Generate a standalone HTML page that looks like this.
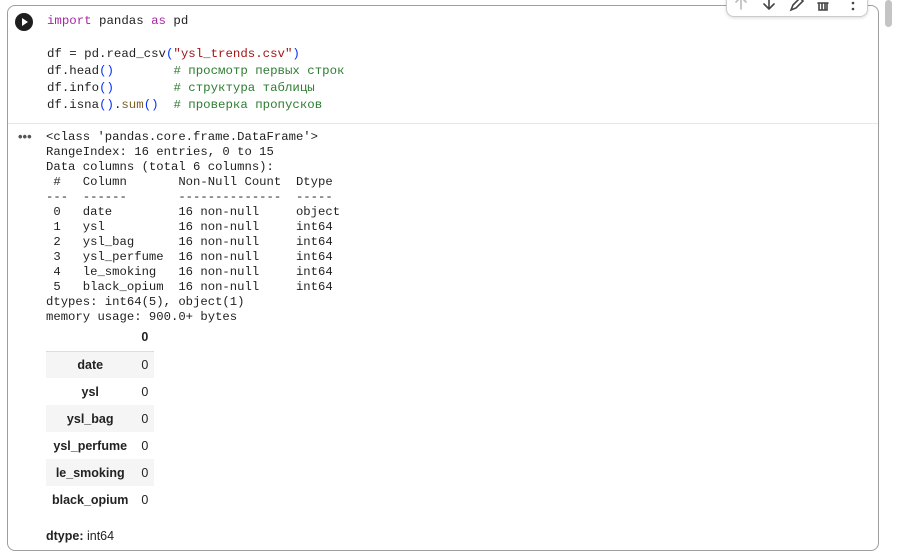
<!DOCTYPE html>
<html><head><meta charset="utf-8"><style>
body{margin:0;width:900px;height:558px;background:#fff;overflow:hidden;position:relative;font-family:"Liberation Sans",sans-serif}
.cell{position:absolute;left:7px;top:5px;width:872px;height:546px;border:1px solid #9e9e9e;border-radius:8px;box-sizing:border-box}
.code{position:absolute;left:47px;top:13px;font:12.4px/16.7px "Liberation Mono",monospace;color:#1f1f1f;white-space:pre;margin:0}
.kw{color:#a626a4}.st{color:#a31515}.br{color:#0431fa}.cm{color:#2e7d32}.fn{color:#795e26}
.sep{position:absolute;left:8px;top:123px;width:870px;height:1px;background:#e8e8e8}
.out{position:absolute;left:46px;top:130px;font:12.25px/15px "Liberation Mono",monospace;color:#1f1f1f;white-space:pre;margin:0}
table{position:absolute;left:46px;top:324px;border-collapse:collapse;font-size:12.5px;color:#222}
td,th{height:27px;box-sizing:border-box}
th{text-align:center;font-weight:bold;padding:0 6px}
td{text-align:left;padding:0 6px 0 7px}
tr.g{background:#f5f5f5}
thead th{border-bottom:1px solid #ddd}
.dt{position:absolute;left:46px;top:529px;font-size:12.5px;color:#222}
.tb{position:absolute;left:726px;top:-10px;width:140px;height:25px;border:1px solid #ccc;border-radius:8px;background:#fff;box-shadow:0 1px 3px rgba(0,0,0,.15)}
.sb{position:absolute;left:885px;top:0;width:7px;height:27px;background:#c4c4c4;border-radius:4px}
</style></head><body>
<div class="cell"></div>
<div class="tb">
<svg width="140" height="25" style="position:absolute;left:0;top:0" fill="none" stroke-width="1.6" stroke-linecap="round">
<path d="M14 6v12M9 11l5-5 5 5" stroke="#bbb"/>
<path d="M42 6v12M37 13l5 5 5-5" stroke="#444"/>
<path d="M64 19l2-5 7-7 3 3-7 7z" stroke="#444"/>
<path d="M92 12v7h8v-7M91 12h10M95 12v6M98 12v6" stroke="#444"/>
<circle cx="126" cy="12" r="1.3" fill="#444" stroke="none"/><circle cx="126" cy="18" r="1.3" fill="#444" stroke="none"/>
</svg></div>
<div class="sb"></div>
<svg style="position:absolute;left:15px;top:13px" width="18" height="18"><circle cx="9" cy="9" r="9" fill="#1f1f1f"/><path d="M7 5v8l6-4z" fill="#fff"/></svg>
<pre class="code"><span class="kw">import</span> pandas <span class="kw">as</span> pd

df = pd.read_csv<span class="br">(</span><span class="st">"ysl_trends.csv"</span><span class="br">)</span>
df.head<span class="br">()</span>        <span class="cm"># просмотр первых строк</span>
df.info<span class="br">()</span>        <span class="cm"># структура таблицы</span>
df.isna<span class="br">()</span>.<span class="fn">sum</span><span class="br">()</span>  <span class="cm"># проверка пропусков</span></pre>
<div class="sep"></div>
<div style="position:absolute;left:18px;top:129px;font:bold 13px 'Liberation Sans';color:#555">•••</div>
<pre class="out">&lt;class 'pandas.core.frame.DataFrame'&gt;
RangeIndex: 16 entries, 0 to 15
Data columns (total 6 columns):
 #   Column       Non-Null Count  Dtype 
---  ------       --------------  ----- 
 0   date         16 non-null     object
 1   ysl          16 non-null     int64 
 2   ysl_bag      16 non-null     int64 
 3   ysl_perfume  16 non-null     int64 
 4   le_smoking   16 non-null     int64 
 5   black_opium  16 non-null     int64 
dtypes: int64(5), object(1)
memory usage: 900.0+ bytes</pre>
<table>
<thead><tr><th></th><th style="text-align:left;padding-left:7px">0</th></tr></thead>
<tbody>
<tr class="g"><th>date</th><td>0</td></tr>
<tr><th>ysl</th><td>0</td></tr>
<tr class="g"><th>ysl_bag</th><td>0</td></tr>
<tr><th>ysl_perfume</th><td>0</td></tr>
<tr class="g"><th>le_smoking</th><td>0</td></tr>
<tr><th>black_opium</th><td>0</td></tr>
</tbody></table>
<div class="dt"><b>dtype:</b> int64</div>
</body></html>
